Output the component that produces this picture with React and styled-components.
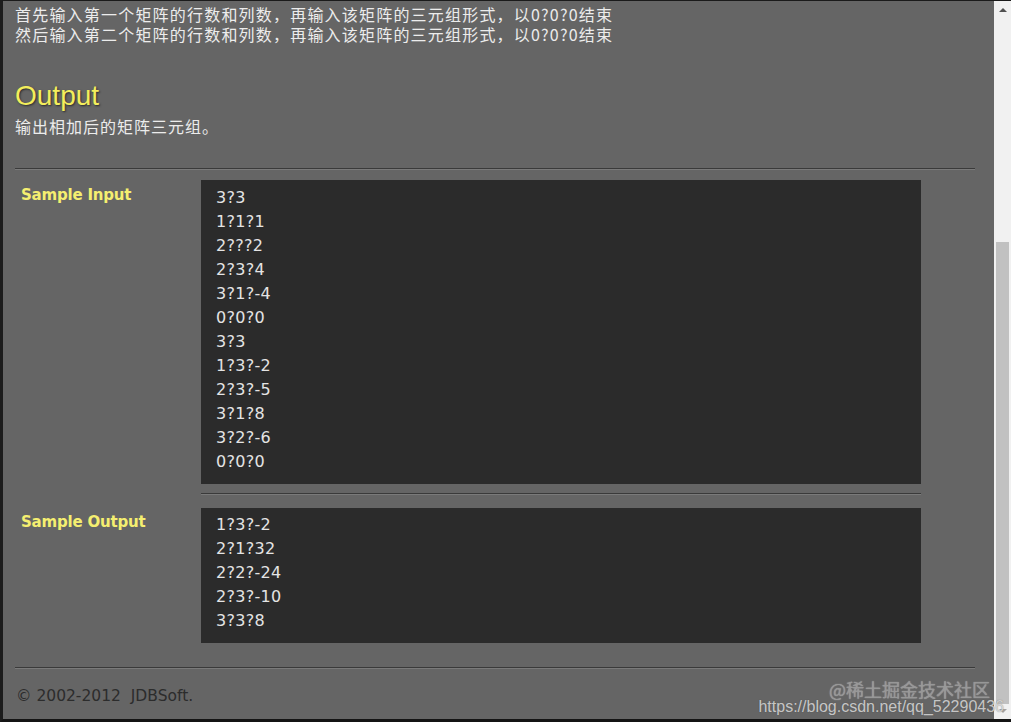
import React from 'react';
import styled, { createGlobalStyle } from 'styled-components';

const GlobalStyle = createGlobalStyle`
  html, body { margin: 0; padding: 0; background: #111; }
  body { width: 1011px; height: 722px; overflow: hidden; }
`;

const Frame = styled.div`
  position: relative;
  box-sizing: border-box;
  width: 1011px;
  height: 722px;
  border-top: 1px solid #1a1a1a;
  border-left: 3px solid #1c1c1c;
  border-bottom: 3px solid #141414;
  display: flex;
  background: #656565;
  overflow: hidden;
`;

const Page = styled.div`
  flex: 1;
  padding: 3px 0 0 12px;
  font-family: "Noto Sans CJK SC", "DejaVu Sans", sans-serif;
  color: #ececec;
`;

const Desc = styled.div`
  font-size: 16px;
  line-height: 20px;
  letter-spacing: ${p => p.ls || 1.2}px;
  margin-top: ${p => p.mt || 0}px;
`;

const Heading = styled.h2`
  margin: 36px 0 0 0;
  font-family: "Liberation Sans", Arial, sans-serif;
  font-weight: normal;
  font-size: 28px;
  line-height: 32px;
  color: #f3ee5c;
  text-shadow: 1px 1px 2px #2a2a2a;
`;

const Rule = styled.div`
  width: ${p => p.w || 960}px;
  margin-left: ${p => p.ml || 0}px;
  border-top: 1px solid #3a3a3a;
  border-bottom: 1px solid #7a7a7a;
`;

const Row = styled.div`
  display: grid;
  grid-template-columns: 186px 720px;
  width: 960px;
`;

const Label = styled.div`
  padding: ${p => p.pt}px 0 0 6px;
  font-family: "DejaVu Sans", Verdana, sans-serif;
  font-weight: bold;
  font-size: 15px;
  letter-spacing: -0.2px;
  color: #f5ef70;
`;

const Pre = styled.pre`
  margin: 0;
  background: #2b2b2b;
  padding: ${p => p.pad};
  font-family: "DejaVu Sans", Verdana, sans-serif;
  font-size: 16px;
  letter-spacing: 0.3px;
  line-height: 24px;
  color: #e4e4e4;
`;

const Footer = styled.div`
  padding: 18px 0 0 1px;
  font-family: "DejaVu Sans", Verdana, sans-serif;
  font-size: 15.5px;
  color: #2c2c2c;
  white-space: pre;
`;

const Scrollbar = styled.div`
  width: 17px;
  background: #f1f1f1;
  display: flex;
  flex-direction: column;
  align-items: center;
`;

const Arrow = styled.div`
  width: 0;
  height: 0;
  border-left: 4px solid transparent;
  border-right: 4px solid transparent;
  ${p => p.down
    ? 'border-top: 4px solid #a3a3a3; margin-top: 5px;'
    : 'border-bottom: 4px solid #505050; margin-top: 7px;'}
`;

const Track = styled.div`
  flex: 1;
  width: 100%;
  padding: 230px 2px 0;
  box-sizing: border-box;
  display: flex;
`;

const Thumb = styled.div`
  flex: 1;
  background: #c1c1c1;
`;

const Watermark = styled.div`
  position: absolute;
  right: 7px;
  bottom: 3px;
  text-align: right;
  pointer-events: none;
`;

const WmTop = styled.div`
  font-family: "Noto Sans CJK SC", sans-serif;
  font-size: 18px;
  line-height: 18px;
  margin-right: 14px;
  color: rgba(150, 150, 150, 0.9);
  text-shadow: 0 0 1px rgba(255,255,255,0.5);
`;

const WmUrl = styled.div`
  font-family: "Liberation Sans", Arial, sans-serif;
  font-size: 16px;
  line-height: 18px;
  color: rgba(230, 230, 230, 0.8);
  text-shadow: 0 0 1px rgba(60, 60, 60, 0.6);
`;

const Gap = styled.div`
  height: ${p => p.h}px;
`;

const input = ['3?3', '1?1?1', '2???2', '2?3?4', '3?1?-4', '0?0?0', '3?3', '1?3?-2', '2?3?-5', '3?1?8', '3?2?-6', '0?0?0'];
const output = ['1?3?-2', '2?1?32', '2?2?-24', '2?3?-10', '3?3?8'];

export default function App() {
  return (
    <>
      <GlobalStyle />
      <Frame>
        <Page>
          <Desc>首先输入第一个矩阵的行数和列数，再输入该矩阵的三元组形式，以0?0?0结束</Desc>
          <Desc>然后输入第二个矩阵的行数和列数，再输入该矩阵的三元组形式，以0?0?0结束</Desc>
          <Heading>Output</Heading>
          <Desc ls={1} mt={4}>输出相加后的矩阵三元组。</Desc>
          <Gap h={32} />
          <Rule />
          <Gap h={10} />
          <Row>
            <Label pt={6}>Sample Input</Label>
            <Pre pad="6px 15px 10px">{input.join('\n')}</Pre>
          </Row>
          <Gap h={9} />
          <Rule w={720} ml={186} />
          <Gap h={13} />
          <Row>
            <Label pt={5}>Sample Output</Label>
            <Pre pad="5px 15px 10px">{output.join('\n')}</Pre>
          </Row>
          <Gap h={24} />
          <Rule />
          <Footer>© 2002-2012  JDBSoft.</Footer>
        </Page>
        <Scrollbar>
          <Arrow />
          <Track><Thumb /></Track>
          <Arrow down />
          <Gap h={6} />
        </Scrollbar>
        <Watermark>
          <WmTop>@稀土掘金技术社区</WmTop>
          <WmUrl>https://blog.csdn.net/qq_52290436</WmUrl>
        </Watermark>
      </Frame>
    </>
  );
}
